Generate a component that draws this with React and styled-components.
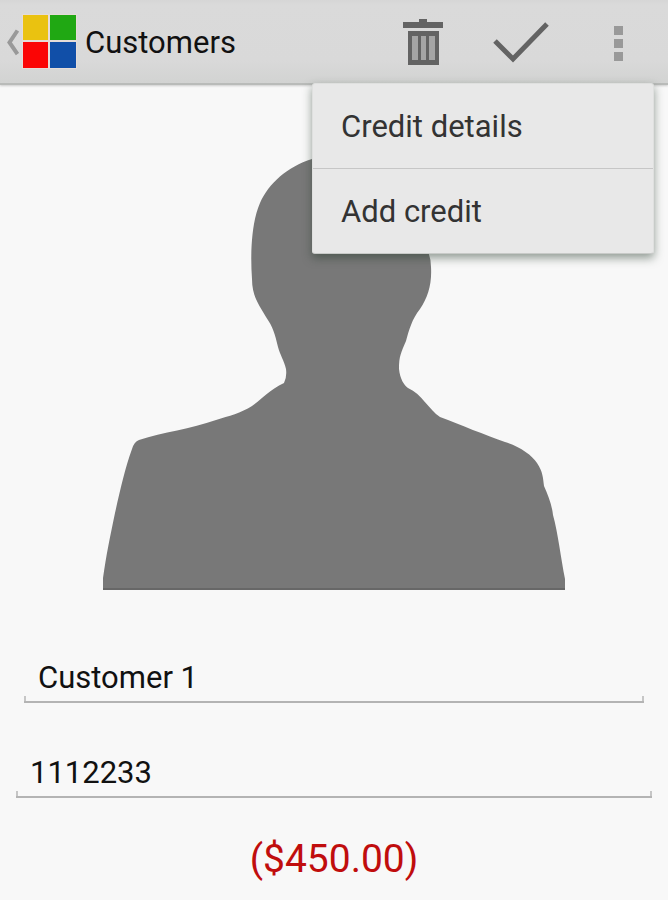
import { useState } from "react";
import styled, { createGlobalStyle } from "styled-components";

const GlobalStyle = createGlobalStyle`
  * {
    box-sizing: border-box;
  }
  body {
    margin: 0;
    background: #f8f8f8;
    color: #111;
    font-family: Roboto, "Liberation Sans", sans-serif;
  }
  button,
  input {
    font: inherit;
    color: inherit;
  }
`;

const Page = styled.div`
  display: flex;
  flex-direction: column;
  min-height: 100vh;
`;

const ActionBar = styled.header`
  position: relative;
  display: flex;
  align-items: stretch;
  height: 85px;
  background: linear-gradient(#d6d6d6, #dadada 5px, #d9d9d9 60px, #d2d3d2);
  border-bottom: 2px solid #b9bbb9;
  box-shadow: 0 1px 2px #ccc;
`;

const HomeLink = styled.a`
  display: flex;
  align-items: center;
  gap: 3px;
  padding-left: 6px;
  color: inherit;
  text-decoration: none;
`;

const Title = styled.h1`
  flex: 1;
  margin: 0;
  padding: 3px 0 0 8px;
  font-size: 31px;
  font-weight: 400;
  line-height: 80px;
`;

const Action = styled.button`
  display: flex;
  align-items: center;
  justify-content: center;
  width: 98px;
  padding: 0;
  border: 0;
  background: none;
  cursor: pointer;
`;

const Menu = styled.ul`
  position: absolute;
  top: 83px;
  right: 14px;
  z-index: 1;
  width: 342px;
  margin: 0;
  padding: 0;
  list-style: none;
  background: #e8e8e8;
  border: 1px solid #dfe0df;
  border-bottom-color: #c8cac8;
  border-radius: 3px;
  box-shadow: 0 4px 10px rgba(40, 60, 45, 0.5);
`;

const MenuItem = styled.li`
  & + & {
    border-top: 1px solid #c6c6c6;
  }
`;

const MenuButton = styled.button`
  display: block;
  width: 100%;
  padding: 3px 28px 1px;
  border: 0;
  background: none;
  color: #333;
  font-size: 31px;
  line-height: 80px;
  text-align: left;
  cursor: pointer;
`;

const Form = styled.form`
  display: flex;
  flex-direction: column;
  padding: 70px 16px 0;
`;

const Photo = styled.svg`
  align-self: center;
  width: 462px;
  max-width: 100%;
  height: auto;
`;

const Field = styled.div`
  margin: ${(props) => (props.$inset ? "64px 8px 0" : "46px 0 0")};
`;

// underline with a short tick at either end
const TextInput = styled.input`
  display: block;
  width: 100%;
  height: 49px;
  padding: 0 14px 3px;
  border: 0;
  outline: 0;
  font-size: 31px;
  background:
    linear-gradient(#b4b4b4, #b4b4b4) bottom / 100% 2px no-repeat,
    linear-gradient(#c6c6c6, #c6c6c6) left bottom / 2px 7px no-repeat,
    linear-gradient(#c6c6c6, #c6c6c6) right bottom / 2px 7px no-repeat;
`;

const Balance = styled.output`
  display: block;
  padding-top: 37px;
  color: #c00d0d;
  font-size: 39px;
  line-height: 48px;
  text-align: center;
`;

function BackIcon() {
  return (
    <svg width="13" height="28" viewBox="0 0 13 28" fill="none" aria-hidden="true">
      <path d="M11.500 2.500L3.500 14.500l8 11.500" stroke="#999" strokeWidth="4" />
    </svg>
  );
}

function Logo() {
  return (
    <svg width="55" height="55" viewBox="0 0 55 55" aria-hidden="true">
      <path fill="#e6dcd8" d="M0 0h55v55H0z" />
      <path fill="#eac210" d="M1 1h25v25H1z" />
      <path fill="#20a813" d="M28 1h26v25H28z" />
      <path fill="#fb0505" d="M1 28h25v26H1z" />
      <path fill="#114fa8" d="M28 28h26v26H28z" />
    </svg>
  );
}

function TrashIcon() {
  return (
    <svg width="40" height="46" viewBox="0 0 40 46" aria-hidden="true">
      <path fill="#636363" d="M16 0h8v3h16v6H0V3h16z" />
      <path fill="#636363" d="M5 12h31v34H5z" />
      <path fill="#a5a5a5" d="M9 17h6v24H9zM18 17h5v24h-5zM26 17h6v24h-6z" />
    </svg>
  );
}

function CheckIcon() {
  return (
    <svg width="56" height="42" viewBox="0 0 56 42" fill="none" aria-hidden="true">
      <path d="M2 20l18 18L54 3" stroke="#636363" strokeWidth="5" />
    </svg>
  );
}

function OverflowIcon() {
  return (
    <svg width="10" height="40" viewBox="0 0 10 40" aria-hidden="true">
      <path fill="#999" d="M0 4h9v9H0zM0 17h9v9H0zM0 30h9v9H0z" />
    </svg>
  );
}

function Silhouette() {
  return (
    <Photo viewBox="103 155 462 435" role="img" aria-label="Customer photo">
      <path
        fill="#787878"
        d="M103 590V578C106 556 110 537 115 513C120 491 125 468 132 449Q134 442 139 440
        C163 432 191 429 216 420C229 416 241 413 252 406C262 399 269 390 284 383
        Q287 377 286 369C284 360 280 355 278 347C275 334 273 327 266 317
        C260 306 252 297 252 279C250 251 252 221 260 203C269 183 287 167 312 159
        C338 151 370 155 392 170C414 184 427 215 427 250Q431 257 431 267
        C432 284 428 297 420 309C412 319 409 330 406 341C401 353 399 356 399 369
        C400 379 404 385 408 388C422 394 429 410 440 417C461 425 485 435 505 442
        C519 446 532 455 537 463C543 472 543 478 544 486C548 495 552 505 553 515
        C558 533 561 559 565 579V590Z"
      />
      <path fill="#676767" d="M103 588h462v2H103z" />
    </Photo>
  );
}

export default function App() {
  const [menuOpen, setMenuOpen] = useState(true);
  const [name, setName] = useState("Customer 1");
  const [code, setCode] = useState("1112233");

  return (
    <Page>
      <GlobalStyle />
      <ActionBar>
        <HomeLink href="#" aria-label="Back">
          <BackIcon />
          <Logo />
        </HomeLink>
        <Title>Customers</Title>
        <Action type="button" aria-label="Delete">
          <TrashIcon />
        </Action>
        <Action type="button" aria-label="Save">
          <CheckIcon />
        </Action>
        <Action
          type="button"
          aria-label="More options"
          aria-expanded={menuOpen}
          onClick={() => setMenuOpen(!menuOpen)}
        >
          <OverflowIcon />
        </Action>
        {menuOpen && (
          <Menu>
            <MenuItem>
              <MenuButton type="button">Credit details</MenuButton>
            </MenuItem>
            <MenuItem>
              <MenuButton type="button">Add credit</MenuButton>
            </MenuItem>
          </Menu>
        )}
      </ActionBar>
      <Form>
        <Silhouette />
        <Field $inset>
          <TextInput
            aria-label="Name"
            value={name}
            onChange={(e) => setName(e.target.value)}
          />
        </Field>
        <Field>
          <TextInput
            aria-label="Code"
            value={code}
            onChange={(e) => setCode(e.target.value)}
          />
        </Field>
        <Balance>($450.00)</Balance>
      </Form>
    </Page>
  );
}
